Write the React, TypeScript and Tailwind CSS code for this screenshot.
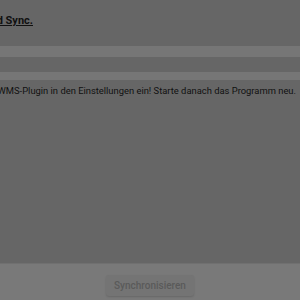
import React from "react";

export default function App() {
  return (
    <div
      className="w-[300px] h-[300px] bg-[#666666] flex flex-col overflow-hidden"
      style={{ fontFamily: "Roboto, 'Liberation Sans', sans-serif" }}
    >
      <div className="h-[46px] flex flex-col">
        <div className="mt-[14px] w-[33px] flex justify-end overflow-hidden">
          <span className="whitespace-nowrap text-[11px] leading-[14px] font-bold underline text-[#111111]">
            Cloud Sync.
          </span>
        </div>
      </div>
      <div className="h-[11px] bg-[#767676]" />
      <div className="h-[15px]" />
      <div className="h-[8px] bg-[#767676]" />
      <div className="mt-[4px] w-[296px] flex justify-end overflow-hidden">
        <span className="whitespace-nowrap text-[9.4px] leading-[14px] text-[#111111]">
          Bitte richte das WMS-Plugin in den Einstellungen ein! Starte danach das Programm neu.
        </span>
      </div>
      <div className="flex-1" />
      <div className="h-[37px] bg-[#797979] border-t border-[#707070] flex justify-center pt-[11px]">
        <button className="w-[88px] h-[21px] rounded-[3px] bg-[#747474] text-[#5a5a5a] text-[10px] font-medium flex items-center justify-center shadow-[0_1px_2px_rgba(0,0,0,0.15)]">
          Synchronisieren
        </button>
      </div>
    </div>
  );
}
